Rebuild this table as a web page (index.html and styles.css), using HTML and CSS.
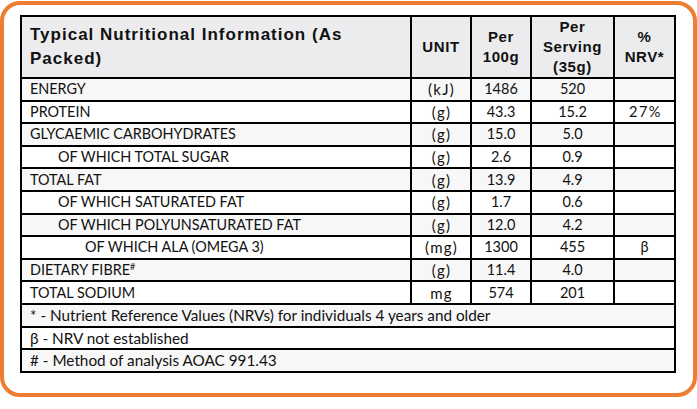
FILE: index.html
```html
<!DOCTYPE html>
<html>
<head>
<meta charset="utf-8">
<link rel="stylesheet" href="styles.css">
</head>
<body>
<div class="frame">
  <table class="nip">
    <colgroup>
      <col class="c-name"><col class="c-unit"><col class="c-100"><col class="c-serv"><col class="c-nrv">
    </colgroup>
    <thead>
      <tr class="head">
        <th class="title">Typical Nutritional Information (As<br>Packed)</th>
        <th>UNIT</th>
        <th>Per<br>100g</th>
        <th>Per<br>Serving<br>(35g)</th>
        <th>%<br>NRV*</th>
      </tr>
    </thead>
    <tbody>
      <tr class="alt"><td class="name">ENERGY</td><td class="unit">(kJ)</td><td>1486</td><td>520</td><td></td></tr>
      <tr><td class="name">PROTEIN</td><td class="unit">(g)</td><td>43.3</td><td>15.2</td><td class="pct">27%</td></tr>
      <tr class="alt"><td class="name">GLYCAEMIC CARBOHYDRATES</td><td class="unit">(g)</td><td>15.0</td><td>5.0</td><td></td></tr>
      <tr><td class="name l1">OF WHICH TOTAL SUGAR</td><td class="unit">(g)</td><td>2.6</td><td>0.9</td><td></td></tr>
      <tr class="alt"><td class="name">TOTAL FAT</td><td class="unit">(g)</td><td>13.9</td><td>4.9</td><td></td></tr>
      <tr><td class="name l1">OF WHICH SATURATED FAT</td><td class="unit">(g)</td><td>1.7</td><td>0.6</td><td></td></tr>
      <tr class="alt"><td class="name l1">OF WHICH POLYUNSATURATED FAT</td><td class="unit">(g)</td><td>12.0</td><td>4.2</td><td></td></tr>
      <tr><td class="name l2">OF WHICH ALA (OMEGA 3)</td><td class="unit">(mg)</td><td>1300</td><td>455</td><td>β</td></tr>
      <tr class="alt"><td class="name">DIETARY FIBRE<sup>#</sup></td><td class="unit">(g)</td><td>11.4</td><td>4.0</td><td></td></tr>
      <tr><td class="name">TOTAL SODIUM</td><td class="unit">mg</td><td>574</td><td>201</td><td></td></tr>
      <tr class="alt"><td class="note" colspan="5">* - Nutrient Reference Values (NRVs) for individuals 4 years and older</td></tr>
      <tr><td class="note" colspan="5">β - NRV not established</td></tr>
      <tr class="alt"><td class="note" colspan="5"># - Method of analysis AOAC 991.43</td></tr>
    </tbody>
  </table>
</div>
</body>
</html>
```

FILE: styles.css
```css
html, body {
  margin: 0;
  padding: 0;
  background: #ffffff;
}

.frame {
  box-sizing: border-box;
  width: 697px;
  height: 396px;
  margin-top: 1px;
  border: 4px solid #ed7d31;
  border-radius: 20px;
  padding: 10px 0 0 16px;
}

.nip {
  border-collapse: collapse;
  table-layout: fixed;
  width: 656px;
  font-family: Lato, "Open Sans", sans-serif;
  font-size: 14.5px;
  color: #111;
}

.c-name { width: 390px; }
.c-unit { width: 60px; }
.c-100 { width: 60px; }
.c-serv { width: 83px; }
.c-nrv { width: 61px; }

.nip th,
.nip td {
  border: 2px solid #000;
  padding: 0;
  text-align: center;
  vertical-align: middle;
}

.head {
  height: 61px;
  background: #ececee;
}

.head th {
  font-family: "Liberation Sans", Arial, sans-serif;
  font-weight: bold;
  font-size: 15px;
  line-height: 20px;
  letter-spacing: 0.6px;
  color: #111;
}

.head th.title {
  text-align: left;
  padding-left: 8px;
  line-height: 24px;
  font-size: 17px;
  letter-spacing: 1px;
}

.nip tbody tr {
  height: 22.6px;
  background: #ffffff;
}

.nip tbody tr.alt {
  background: #f7f7f7;
}

.nip td {
  line-height: 18px;
}

.nip td.name {
  text-align: left;
  padding-left: 8px;
  font-size: 14.4px;
}

.nip td.l1 { padding-left: 36px; }
.nip td.l2 { padding-left: 63px; }

.nip td.unit {
  font-size: 15px;
  letter-spacing: 1.2px;
  padding-left: 1px;
}

.nip td.pct {
  letter-spacing: 1.5px;
  padding-left: 2px;
}

.nip td.note {
  text-align: left;
  padding-left: 8px;
  font-size: 15.3px;
}

sup {
  font-size: 9px;
  line-height: 0;
  vertical-align: 5px;
}
```
